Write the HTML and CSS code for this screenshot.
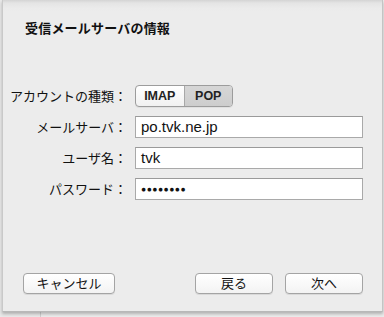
FILE: index.html
```html
<!DOCTYPE html>
<html lang="ja">
<head>
<meta charset="utf-8">
<link rel="stylesheet" href="styles.css">
</head>
<body>
<div class="sheet">
  <h1 class="title">受信メールサーバの情報</h1>
  <div class="form">
    <div class="label">アカウントの種類：</div>
    <div class="seg">
      <span class="seg-item">IMAP</span>
      <span class="seg-item on">POP</span>
    </div>
    <div class="label">メールサーバ：</div>
    <div class="field">po.tvk.ne.jp</div>
    <div class="label">ユーザ名：</div>
    <div class="field">tvk</div>
    <div class="label">パスワード：</div>
    <div class="field pw">●●●●●●●●</div>
  </div>
  <div class="buttons">
    <span class="btn cancel">キャンセル</span>
    <span class="spacer"></span>
    <span class="btn back">戻る</span>
    <span class="btn next">次へ</span>
  </div>
</div>
</body>
</html>
```
FILE: styles.css
```css
html, body {
  margin: 0;
  padding: 0;
}
body {
  width: 384px;
  height: 317px;
  overflow: hidden;
  background: linear-gradient(to right, #e9e9e9 40px, #cfcfcf 40px, #cfcfcf 41px, #ececec 41px);
  font-family: "Noto Sans CJK JP", "Liberation Sans", sans-serif;
  color: #111;
}
.sheet {
  box-sizing: border-box;
  width: 381px;
  height: 312px;
  margin-left: 2px;
  background: linear-gradient(to bottom, #d4d4d4 0px, #e4e4e4 3px, #ebebeb 8px, #ececec 12px);
  border-left: 1px solid #c9c9c9;
  border-right: 1px solid #c4c4c4;
  border-bottom: 1px solid #b8b8b8;
  box-shadow: 0 2px 3px rgba(0,0,0,0.25);
  display: flex;
  flex-direction: column;
}
.title {
  margin: 19px 0 0 22px;
  font-size: 13px;
  line-height: 18px;
  font-weight: bold;
  letter-spacing: 0.2px;
}
.form {
  margin-top: 48px;
  display: grid;
  grid-template-columns: 124px 228px;
  column-gap: 8px;
  row-gap: 9px;
  align-items: center;
}
.label {
  text-align: right;
  font-size: 13px;
  line-height: 22px;
  white-space: nowrap;
}
.seg {
  display: flex;
  width: 96px;
  height: 20px;
  border: 1px solid #9c9c9c;
  border-radius: 4px;
  overflow: hidden;
  background: linear-gradient(#ffffff, #f1f1f1);
  box-shadow: 0 1px 0 rgba(0,0,0,0.05);
}
.seg-item {
  flex: 1;
  text-align: center;
  font-family: "Liberation Sans", "Noto Sans", sans-serif;
  font-weight: bold;
  font-size: 12.5px;
  line-height: 20px;
  color: #222;
}
.seg-item + .seg-item {
  border-left: 1px solid #a8a8a8;
}
.seg-item.on {
  background: linear-gradient(#d6d6d6, #cdcdcd);
}
.field {
  box-sizing: border-box;
  height: 22px;
  background: #fff;
  border: 1px solid #a9a9a9;
  border-top-color: #9a9a9a;
  padding-left: 5px;
  font-family: "Liberation Sans", "Noto Sans", sans-serif;
  font-size: 15px;
  line-height: 20px;
  color: #111;
}
.field.pw {
  font-size: 8.5px;
  letter-spacing: 0.5px;
  line-height: 20px;
}
.buttons {
  margin-top: auto;
  margin-bottom: 17px;
  display: flex;
  align-items: center;
  padding: 0 19px 0 20px;
  gap: 12px;
}
.spacer {
  flex: 1;
}
.btn {
  box-sizing: border-box;
  height: 21px;
  border: 1px solid #a4a4a4;
  border-radius: 4px;
  background: linear-gradient(#ffffff, #f3f3f3);
  box-shadow: 0 1px 0 rgba(0,0,0,0.08);
  text-align: center;
  font-size: 13px;
  line-height: 18px;
}
.cancel { width: 92px; }
.back { width: 78px; }
.next { width: 78px; }
```
